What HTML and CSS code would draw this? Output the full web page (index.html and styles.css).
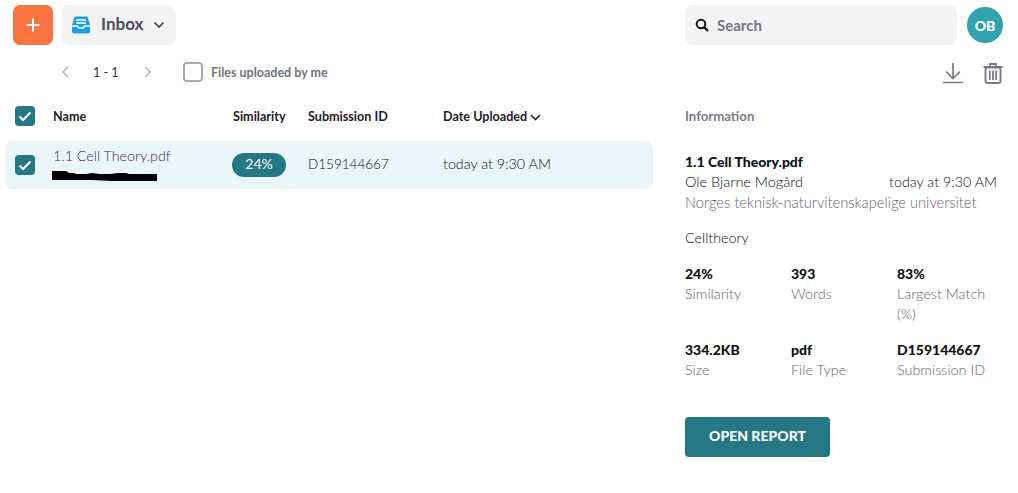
FILE: index.html
```html
<!DOCTYPE html>
<html lang="en">
<head>
<meta charset="utf-8">
<title>Inbox</title>
<link rel="stylesheet" href="styles.css">
</head>
<body>
<div class="app">
  <main class="list">
    <div class="topbar">
      <button class="add" aria-label="Add"><svg width="16" height="16" viewBox="0 0 16 16"><path d="M8 1.500v13M1.500 8h13" stroke="#fff" stroke-width="2" fill="none"/></svg></button>
      <button class="folder">
        <svg width="18" height="18" viewBox="0 0 18 18"><path d="M4 0.500h10a2 2 0 0 1 2 2L18 9v6.500a2 2 0 0 1-2 2H2a2 2 0 0 1-2-2V9L2 2.500a2 2 0 0 1 2-2z" fill="#1e9be8"/><path d="M4 4h10M4 7h10" stroke="#fff" stroke-width="1.600"/><path d="M0 10h5.500l1 2h5l1-2H18" stroke="#fff" stroke-width="1.400" fill="none"/></svg>
        <span class="folder-name">Inbox</span>
        <svg width="12" height="8" viewBox="0 0 12 8"><path d="M1.500 1.500 6 6l4.500-4.500" stroke="#3f4450" stroke-width="1.700" fill="none"/></svg>
      </button>
    </div>
    <div class="pager">
      <svg width="9" height="12" viewBox="0 0 9 12"><path d="M7 1 2 6l5 5" stroke="#b4b7bd" stroke-width="1.500" fill="none"/></svg>
      <span class="range">1 - 1</span>
      <svg width="9" height="12" viewBox="0 0 9 12"><path d="M2 1l5 5-5 5" stroke="#b4b7bd" stroke-width="1.500" fill="none"/></svg>
      <span class="box"></span>
      <span class="mine">Files uploaded by me</span>
    </div>
    <div class="row head">
      <span class="check"><svg width="14" height="11" viewBox="0 0 14 11"><path d="M1.500 5.500 5 9l7.500-7.500" stroke="#fff" stroke-width="2" fill="none"/></svg></span>
      <span class="c-name">Name</span>
      <span class="c-sim">Similarity</span>
      <span class="c-id">Submission ID</span>
      <span class="c-date">Date Uploaded <svg width="11" height="7" viewBox="0 0 11 7"><path d="M1 1l4.500 4.500L10 1" stroke="#222" stroke-width="1.600" fill="none"/></svg></span>
    </div>
    <div class="row item">
      <span class="check"><svg width="14" height="11" viewBox="0 0 14 11"><path d="M1.500 5.500 5 9l7.500-7.500" stroke="#fff" stroke-width="2" fill="none"/></svg></span>
      <div class="c-name">
        <div class="file">1.1 Cell Theory.pdf</div>
        <svg class="scribble" width="105" height="11" viewBox="0 0 105 11"><path d="M0 1h14l3 2h5l2 1 10 0 6-1 8 1h10l8-1h8l3 1h31v7H60l-20-1H0z" fill="#000"/></svg>
      </div>
      <span class="c-sim"><span class="pill">24%</span></span>
      <span class="c-id cell-text">D159144667</span>
      <span class="c-date cell-text">today at 9:30 AM</span>
    </div>
  </main>
  <aside class="side">
    <div class="topbar search-row">
      <div class="search">
        <svg width="14" height="14" viewBox="0 0 14 14"><circle cx="6" cy="6" r="4.300" stroke="#111" stroke-width="2" fill="none"/><path d="M9.200 9.200 13 13" stroke="#111" stroke-width="2.200"/></svg>
        <span>Search</span>
      </div>
      <div class="avatar">OB</div>
    </div>
    <div class="tools">
      <svg width="22" height="22" viewBox="0 0 22 22"><path d="M11 1v15M4 9.500l7 7 7-7M1 20.500h20" stroke="#787b85" stroke-width="1.700" fill="none"/></svg>
      <svg width="20" height="21" viewBox="0 0 20 21"><path d="M0.500 4h19M7 4V1h6v3" stroke="#787b85" stroke-width="1.800" fill="none"/><rect x="2.500" y="4.500" width="15" height="15.500" rx="2" stroke="#787b85" stroke-width="1.900" fill="none"/><path d="M6.800 7.500v9.500M10 7.500v9.500M13.200 7.500v9.500" stroke="#787b85" stroke-width="1.800"/></svg>
    </div>
    <h2 class="info-title">Information</h2>
    <div class="title">1.1 Cell Theory.pdf</div>
    <div class="owner"><span>Ole Bjarne Mogård</span><span>today at 9:30 AM</span></div>
    <div class="org">Norges teknisk-naturvitenskapelige universitet</div>
    <div class="assign">Celltheory</div>
    <div class="stats">
      <div class="stat"><b>24%</b><span>Similarity</span></div>
      <div class="stat"><b>393</b><span>Words</span></div>
      <div class="stat"><b>83%</b><span>Largest Match (%)</span></div>
      <div class="stat"><b>334.2KB</b><span>Size</span></div>
      <div class="stat"><b>pdf</b><span>File Type</span></div>
      <div class="stat"><b>D159144667</b><span>Submission ID</span></div>
    </div>
    <button class="open">OPEN REPORT</button>
  </aside>
</div>
</body>
</html>
```
FILE: styles.css
```css
* { box-sizing: border-box; }
html, body { margin: 0; padding: 0; background: #fff; }
body { font-family: Lato, "Open Sans", sans-serif; color: #25272c; overflow: hidden; }
button { font-family: inherit; border: 0; cursor: pointer; }
.app { display: flex; width: 1018px; height: 493px; }
.list { width: 648px; margin-left: 5px; margin-right: 32px; flex: none; }
.side { width: 318px; flex: none; }

.topbar { display: flex; align-items: center; height: 40px; margin-top: 5px; gap: 8px; padding-left: 8px; }
.add { width: 40px; height: 40px; border-radius: 7px; background: #f97441; display: flex; align-items: center; justify-content: center; padding: 0; }
.folder { width: 115px; height: 40px; border-radius: 8px; background: #f3f3f4; display: flex; align-items: center; padding: 0 10px 0 11px; color: #4a4e5a; }
.folder-name { font-size: 17px; font-weight: 700; line-height: 20px; margin: -3px 10px 0 11px; }

.pager { display: flex; align-items: center; height: 24px; margin-top: 15px; padding-left: 56px; font-size: 12.500px; }
.range { margin: 0 23px 0 23px; color: #30343f; font-weight: 400; width: 27px; white-space: nowrap; }
.box { width: 20px; height: 20px; margin-left: 31px; border: 2px solid #a9abb2; border-radius: 4px; }
.mine { margin-left: 8px; color: #71747e; font-weight: 700; white-space: nowrap; }

.row { display: flex; align-items: center; font-size: 12.600px; }
.head { height: 32px; margin-top: 16px; font-weight: 700; color: #1e2026; }
.item { height: 48px; margin-top: 9px; background: #e9f5f7; border-radius: 8px; font-size: 14px; }
.check { width: 20px; height: 20px; margin-left: 10px; border-radius: 4px; background: #267784; display: flex; align-items: center; justify-content: center; flex: none; }
.c-name { width: 180px; margin-left: 18px; flex: none; }
.c-sim { width: 75px; flex: none; }
.c-id { width: 135px; flex: none; }
.c-date { white-space: nowrap; }
.cell-text { font-weight: 300; padding-bottom: 3px; font-size: 14.300px; color: #0d0e12; }
.c-id.cell-text { font-size: 13.500px; }
.file { color: #3c2a66; font-size: 14.300px; font-weight: 300; line-height: 18px; }
.scribble { display: block; margin: 5px 0 2px -1px; }
.pill { display: block; width: 54px; height: 24px; margin-left: -1px; border-radius: 12px; background: #267784; color: #fff; text-align: center; line-height: 22px; }

.search-row { padding-left: 0; gap: 10px; }
.search { width: 272px; height: 40px; border-radius: 8px; background: #f3f3f4; display: flex; align-items: center; gap: 8px; padding-left: 10px; font-size: 15px; font-weight: 700; color: #74767f; }
.search span { margin-top: -1px; }
.avatar { width: 36px; height: 36px; border-radius: 50%; background: #30a3af; color: #fff; font-size: 14px; font-weight: 900; display: flex; align-items: center; justify-content: center; }
.tools { display: flex; justify-content: flex-end; align-items: center; gap: 19px; margin-top: 17px; height: 22px; }
.info-title { margin: 22px 0 0; font-size: 13.200px; line-height: 20px; font-weight: 700; color: #7a7d85; }
.title { margin-top: 26px; font-size: 14px; line-height: 20px; font-weight: 900; color: #111; }
.owner { display: flex; justify-content: space-between; width: 312px; font-size: 14.500px; font-weight: 300; line-height: 20px; color: #0d0e12; }
.owner span:last-child { font-size: 14.300px; }
.org { font-size: 14.700px; font-weight: 300; line-height: 20px; color: #63656c; white-space: nowrap; }
.assign { margin-top: 16px; font-size: 14.300px; font-weight: 300; line-height: 20px; color: #0d0e12; }
.stats { display: grid; grid-template-columns: 106px 106px 100px; row-gap: 16px; margin-top: 16px; }
.stat b { display: block; font-size: 14px; line-height: 20px; font-weight: 900; color: #111; }
.stat span { display: block; font-size: 14.400px; font-weight: 300; line-height: 20px; color: #63656c; }
.open { display: block; margin-top: 37px; width: 145px; height: 40px; padding: 0 0 3px; border-radius: 4px; background: #267784; color: #fff; font-size: 14px; font-weight: 900; }
```
